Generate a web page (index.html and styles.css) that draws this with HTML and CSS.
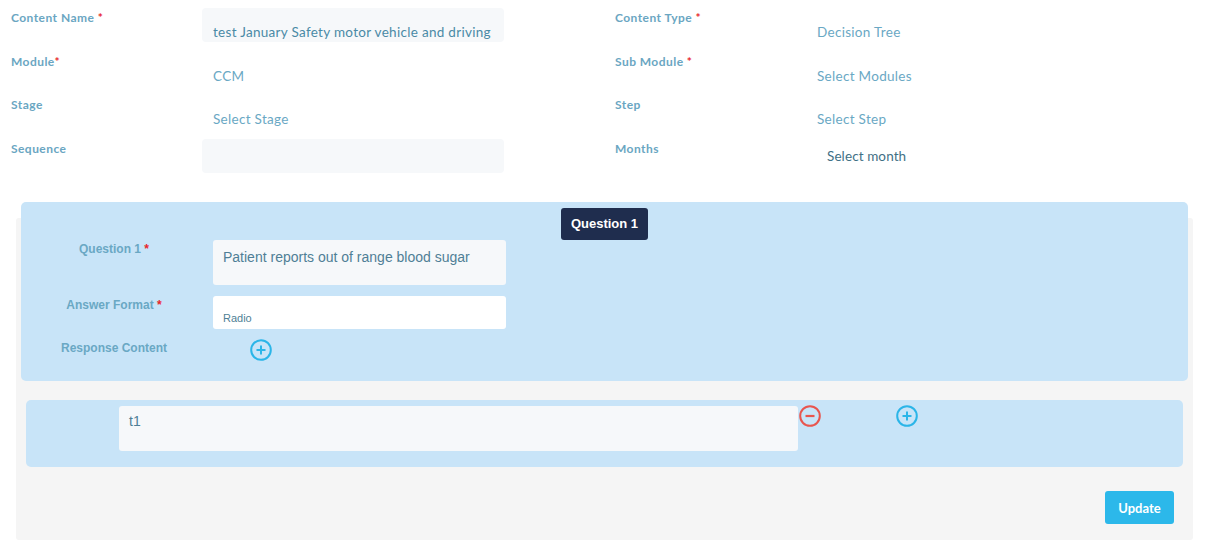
FILE: index.html
```html
<!DOCTYPE html>
<html>
<head>
<meta charset="utf-8">
<link rel="stylesheet" href="styles.css">
</head>
<body>
<div class="form">
  <div class="field">
    <div class="lbl">Content Name <span class="req">*</span></div>
    <div class="val filled dark">test January Safety motor vehicle and driving</div>
  </div>
  <div class="field">
    <div class="lbl">Content Type <span class="req">*</span></div>
    <div class="val">Decision Tree</div>
  </div>
  <div class="field">
    <div class="lbl">Module<span class="req">*</span></div>
    <div class="val">CCM</div>
  </div>
  <div class="field">
    <div class="lbl">Sub Module <span class="req">*</span></div>
    <div class="val">Select Modules</div>
  </div>
  <div class="field">
    <div class="lbl">Stage</div>
    <div class="val">Select Stage</div>
  </div>
  <div class="field">
    <div class="lbl">Step</div>
    <div class="val">Select Step</div>
  </div>
  <div class="field">
    <div class="lbl">Sequence</div>
    <div class="val filled"></div>
  </div>
  <div class="field">
    <div class="lbl">Months</div>
    <div class="val month">Select month</div>
  </div>
</div>

<div class="panel">
  <div class="qbox">
    <div class="badge">Question 1</div>
    <div class="qrow">
      <div class="qlbl">Question 1 <span class="req">*</span></div>
      <div class="qinput tall">Patient reports out of range blood sugar</div>
    </div>
    <div class="qrow">
      <div class="qlbl">Answer Format <span class="req">*</span></div>
      <div class="qinput select">Radio</div>
    </div>
    <div class="qrow">
      <div class="qlbl">Response Content</div>
      <div class="icons">
        <svg class="ic add" width="22" height="22" viewBox="0 0 22 22"><circle cx="11" cy="11" r="9.8" fill="none" stroke="#2bb5e8" stroke-width="2"/><path d="M11 6.5v9M6.5 11h9" stroke="#2bb5e8" stroke-width="2"/></svg>
      </div>
    </div>
  </div>

  <div class="rbox">
    <div class="rinput">t1</div>
    <svg class="ic minus" width="22" height="22" viewBox="0 0 22 22"><circle cx="11" cy="11" r="9.8" fill="none" stroke="#e8554e" stroke-width="2"/><path d="M6.5 11h9" stroke="#e8554e" stroke-width="2.2"/></svg>
    <svg class="ic plus2" width="22" height="22" viewBox="0 0 22 22"><circle cx="11" cy="11" r="9.8" fill="none" stroke="#2bb5e8" stroke-width="2"/><path d="M11 6.5v9M6.5 11h9" stroke="#2bb5e8" stroke-width="2"/></svg>
  </div>

  <div class="actions">
    <button class="btn">Update</button>
  </div>
</div>
</body>
</html>
```

FILE: styles.css
```css
* { box-sizing: border-box; }
body {
  margin: 0;
  background: #ffffff;
  font-family: "Lato", "Open Sans", sans-serif;
}
.form {
  display: grid;
  grid-template-columns: 604px 1fr;
  grid-auto-rows: 43.5px;
  padding: 8px 0 0 11px;
}
.field {
  display: flex;
  align-items: flex-start;
}
.lbl {
  width: 191px;
  line-height: 20px;
  font-size: 12px;
  font-weight: 700;
  color: #6aa6c2;
  letter-spacing: 0.45px;
}
.req { color: #e8262b; }
.val {
  width: 302px;
  height: 34px;
  padding: 15px 0 0 11px;
  line-height: 18px;
  font-size: 13.5px;
  color: #6aa8c4;
  border-radius: 4px;
  letter-spacing: 0.3px;
}
.val.filled { background: #f6f8fa; }
.val.dark { color: #4a8aa6; }
.val.month { padding: 8px 0 0 21px; color: #3f7085; letter-spacing: 0.1px; }

.panel {
  display: flow-root;
  margin: 36px 16px 0 16px;
  width: 1177px;
  height: 322px;
  background: #f5f5f5;
  border-radius: 3px;
}
.qbox {
  margin: -16px 5px 0 5px;
  padding: 6px 0 20px 0;
  background: #c8e4f8;
  border-radius: 5px;
  font-family: "Liberation Sans", Arial, sans-serif;
}
.badge {
  width: 87px;
  height: 32px;
  margin: 0 auto;
  background: #1f2d4e;
  color: #ffffff;
  border-radius: 3px;
  font-size: 13px;
  font-weight: 700;
  line-height: 32px;
  text-align: center;
}
.qrow {
  display: flex;
  align-items: flex-start;
  margin-top: 11px;
}
.badge + .qrow { margin-top: 0; }
.qrow:last-child { margin-top: 10px; }
.qlbl {
  width: 170px;
  margin-left: 8px;
  margin-right: 14px;
  text-align: center;
  font-size: 12px;
  font-weight: 700;
  line-height: 18px;
  color: #6aa8c4;
}
.qinput {
  width: 293px;
  border-radius: 3px;
  color: #4f7f96;
}
.qinput.tall {
  height: 45px;
  padding: 9px 10px 0 10px;
  background: #f6f8fa;
  font-size: 14px;
  line-height: 16px;
}
.qinput.select {
  height: 33px;
  padding: 15px 10px 0 10px;
  background: #ffffff;
  font-size: 11px;
  line-height: 14px;
}
.icons { display: flex; }
.ic { display: block; }
.add { margin-left: 37px; }

.rbox {
  display: flex;
  align-items: flex-start;
  margin: 19px 10px 0 10px;
  height: 67px;
  padding: 6px 0 0 93px;
  background: #c8e4f8;
  border-radius: 5px;
  font-family: "Liberation Sans", Arial, sans-serif;
}
.rinput {
  width: 679px;
  height: 45px;
  padding: 7px 10px 0 10px;
  background: #f6f8fa;
  border-radius: 3px;
  font-size: 14px;
  line-height: 16px;
  color: #4f7f96;
}
.minus { margin: -1px 0 0 1px; }
.plus2 { margin: -1px 0 0 75px; }

.actions {
  display: flex;
  justify-content: flex-end;
  padding: 24px 19px 0 0;
}
.btn {
  width: 69px;
  height: 33px;
  border: none;
  border-radius: 3px;
  background: #2cb8ea;
  color: #ffffff;
  font-family: "Lato", "Open Sans", sans-serif;
  font-size: 13px;
  font-weight: 700;
  padding: 0;
}
```
